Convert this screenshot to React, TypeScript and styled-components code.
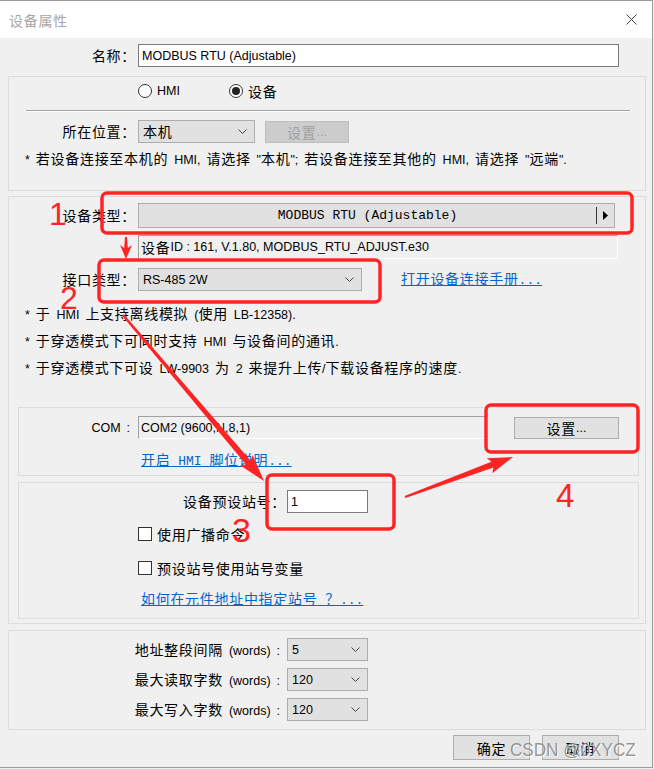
import React from 'react';
import styled, { createGlobalStyle } from 'styled-components';

const GlobalStyle = createGlobalStyle`
  html, body {
    margin: 0;
    padding: 0;
    background: #f0f0f0;
  }
  body {
    font-family: "Liberation Sans", "Noto Sans CJK SC", sans-serif;
    font-size: 12.5px;
    color: #000;
  }
`;

const Window = styled.div`
  position: relative;
  width: 653px;
  height: 768px;
  box-sizing: border-box;
  background: #f0f0f0;
  border-top: 1px solid #9c9c9c;
  border-right: 1px solid #9c9c9c;
  border-bottom: 1px solid #9c9c9c;
  overflow: hidden;
`;

const TitleBar = styled.div`
  height: 37px;
  background: #fff;
  display: flex;
  align-items: center;
  justify-content: space-between;
  padding: 0 15px 0 9px;
  box-sizing: border-box;
`;

const Title = styled.div`
  font-family: "Noto Sans CJK SC", sans-serif;
  font-size: 14px;
  letter-spacing: 0.7px;
  color: #a6a6a6;
`;

const Body = styled.div`
  padding: 6px 6px 0 8px;
`;

// CJK runs: 14px glyphs on a ~15px advance, kept from growing the line box
const Cjk = styled.span`
  font-family: "Noto Sans CJK SC", sans-serif;
  font-size: 14px;
  letter-spacing: 0.7px;
  line-height: 1;
`;

const FieldRow = styled.div<{ $mt?: number; $h?: number }>`
  display: flex;
  align-items: center;
  margin-top: ${(p) => p.$mt ?? 0}px;
  height: ${(p) => p.$h ?? 23}px;
  white-space: nowrap;
`;

const Label = styled.div<{ $w: number; $pr?: number }>`
  width: ${(p) => p.$w}px;
  flex: none;
  box-sizing: border-box;
  padding-right: ${(p) => p.$pr ?? 2}px;
  text-align: right;
  white-space: nowrap;
  word-spacing: 2.5px;
`;

const TextBox = styled.div<{ $w: number }>`
  width: ${(p) => p.$w}px;
  height: 23px;
  box-sizing: border-box;
  border: 1px solid #7a7a7a;
  background: #fff;
  padding: 0 3px;
  display: flex;
  align-items: center;
  white-space: nowrap;
`;

const SunkenBox = styled.div<{ $w: number; $h: number; $ml?: number; $mt?: number }>`
  width: ${(p) => p.$w}px;
  height: ${(p) => p.$h}px;
  margin-left: ${(p) => p.$ml ?? 0}px;
  margin-top: ${(p) => p.$mt ?? 0}px;
  box-sizing: border-box;
  border-top: 1px solid #a0a0a0;
  border-left: 1px solid #a0a0a0;
  border-right: 1px solid #fff;
  border-bottom: 1px solid #fff;
  display: flex;
  align-items: center;
  padding-left: 2px;
  white-space: nowrap;
`;

const Group = styled.div<{ $mt: number; $inset?: boolean; $pb?: number }>`
  margin-top: ${(p) => p.$mt}px;
  margin-left: ${(p) => (p.$inset ? 9 : 0)}px;
  margin-right: ${(p) => (p.$inset ? 6 : 0)}px;
  border: 1px solid #dcdcdc;
  padding-bottom: ${(p) => p.$pb ?? 0}px;
`;

const RadioRow = styled.div`
  height: 28px;
  display: flex;
  align-items: center;
  padding-left: 129px;
`;

const RadioItem = styled.div<{ $w?: number }>`
  display: flex;
  align-items: center;
  gap: 5px;
  width: ${(p) => (p.$w ? `${p.$w}px` : 'auto')};
`;

const Radio = styled.span<{ $on?: boolean }>`
  width: 14px;
  height: 14px;
  box-sizing: border-box;
  border-radius: 50%;
  border: 1px solid #333;
  background: #fff;
  display: flex;
  align-items: center;
  justify-content: center;
  flex: none;
  &::after {
    content: '';
    width: 8px;
    height: 8px;
    border-radius: 50%;
    background: #222;
    display: ${(p) => (p.$on ? 'block' : 'none')};
  }
`;

const Separator = styled.div`
  margin: 5px 15px 0 17px;
  height: 1px;
  background: #a0a0a0;
  border-bottom: 1px solid #fff;
`;

const SelectBox = styled.div<{ $w: number }>`
  width: ${(p) => p.$w}px;
  height: 23px;
  box-sizing: border-box;
  border: 1px solid #adadad;
  background: #e1e1e1;
  display: flex;
  align-items: center;
  justify-content: space-between;
  padding: 0 7px 0 4px;
  flex: none;
`;

const PushButton = styled.div<{ $w: number; $h?: number; $ml?: number; $disabled?: boolean }>`
  width: ${(p) => p.$w}px;
  height: ${(p) => p.$h ?? 25}px;
  margin-left: ${(p) => p.$ml ?? 0}px;
  box-sizing: border-box;
  border: 1px solid ${(p) => (p.$disabled ? '#bfbfbf' : '#adadad')};
  background: ${(p) => (p.$disabled ? '#cccccc' : '#e1e1e1')};
  color: ${(p) => (p.$disabled ? '#a0a0a0' : '#000')};
  display: flex;
  align-items: center;
  justify-content: center;
  flex: none;
`;

const DeviceTypeButton = styled.div`
  width: 477px;
  height: 25px;
  box-sizing: border-box;
  border: 1px solid #adadad;
  background: #e1e1e1;
  display: flex;
  align-items: center;
`;

const DeviceTypeText = styled.div`
  flex: 1;
  text-align: center;
  font-family: "Liberation Mono", monospace;
  font-size: 13px;
`;

const DeviceTypeArrow = styled.div`
  width: 17px;
  height: 17px;
  border-left: 1px solid #333;
  display: flex;
  align-items: center;
  justify-content: center;
`;

const NoteLine = styled.div<{ $mt?: number; $lh?: number }>`
  margin-top: ${(p) => p.$mt ?? 0}px;
  line-height: ${(p) => p.$lh ?? 27}px;
  height: ${(p) => p.$lh ?? 27}px;
  padding-left: 16px;
  white-space: nowrap;
  word-spacing: 2.5px;
`;

const LinkRow = styled.div<{ $mt: number }>`
  margin-top: ${(p) => p.$mt}px;
  height: 20px;
  display: flex;
  align-items: center;
  padding-left: 122px;
`;

const LinkText = styled.span<{ $ml?: number }>`
  margin-left: ${(p) => p.$ml ?? 0}px;
  color: #0066cc;
  text-decoration: underline;
  font-family: "Liberation Mono", "Noto Sans CJK SC", monospace;
  font-size: 13px;
  white-space: nowrap;
`;

const CheckRow = styled.div<{ $mt: number }>`
  margin-top: ${(p) => p.$mt}px;
  height: 20px;
  display: flex;
  align-items: center;
  gap: 5px;
  padding-left: 119px;
`;

const CheckBox = styled.span`
  width: 14px;
  height: 14px;
  box-sizing: border-box;
  border: 1px solid #333;
  background: #fff;
  flex: none;
`;

const Footer = styled.div`
  margin-top: 5px;
  display: flex;
  justify-content: flex-end;
  gap: 12px;
  padding-right: 27px;
`;

const Overlay = styled.svg`
  position: absolute;
  left: 0;
  top: -1px;
  pointer-events: none;
`;

const Watermark = styled.div`
  position: absolute;
  left: 510px;
  top: 738px;
  font-family: "Liberation Sans", sans-serif;
  font-size: 19px;
  color: rgba(125, 125, 125, 0.8);
  text-shadow: 1px 1px 1px rgba(255, 255, 255, 0.9);
  transform: scaleX(0.9);
  transform-origin: left center;
  white-space: nowrap;
  pointer-events: none;
`;

const CJK_RE = /([\u2e80-\u9fff\u3000-\u303f\uff00-\uffef]+)/;

const Mixed = ({ text }: { text: string }) => (
  <>
    {text.split(CJK_RE).map((part, i) =>
      i % 2 === 1 ? <Cjk key={i}>{part}</Cjk> : part
    )}
  </>
);

const Chevron = () => (
  <svg width="9" height="6" viewBox="0 0 9 6">
    <polyline points="0.5,0.5 4.5,4.5 8.5,0.5" fill="none" stroke="#444" strokeWidth="1" />
  </svg>
);

const Select = ({ w, value }: { w: number; value: string }) => (
  <SelectBox $w={w}>
    <span>
      <Mixed text={value} />
    </span>
    <Chevron />
  </SelectBox>
);

const arrowPoints = (
  x1: number,
  y1: number,
  x2: number,
  y2: number,
  head: number,
  headW: number,
  tail: number,
  neck: number
) => {
  const len = Math.hypot(x2 - x1, y2 - y1);
  const ux = (x2 - x1) / len;
  const uy = (y2 - y1) / len;
  const px = -uy;
  const py = ux;
  const bx = x2 - ux * head;
  const by = y2 - uy * head;
  const pts = [
    [x1 + px * tail, y1 + py * tail],
    [bx + px * neck, by + py * neck],
    [bx - ux * 3 + px * headW, by - uy * 3 + py * headW],
    [x2, y2],
    [bx - ux * 3 - px * headW, by - uy * 3 - py * headW],
    [bx - px * neck, by - py * neck],
    [x1 - px * tail, y1 - py * tail],
  ];
  return pts.map((p) => p.map((v) => v.toFixed(1)).join(',')).join(' ');
};

const RED = '#ff2424';

const Annotations = () => (
  <Overlay width={654} height={769} viewBox="0 0 654 769">
    <g fill="none" stroke={RED} strokeWidth={3.5}>
      <rect x={102} y={193} width={530} height={40} rx={5} />
      <rect x={99} y={260} width={281} height={42} rx={5} />
      <rect x={486} y={405} width={152} height={47} rx={5} />
      <rect x={267} y={475} width={127} height={54} rx={5} />
    </g>
    <g fill={RED}>
      <polygon points={arrowPoints(126, 237, 126, 259, 11, 6, 1, 1.8)} />
      <polygon points={arrowPoints(123, 315, 264, 481, 24, 8, 1.2, 3)} />
      <polygon points={arrowPoints(405, 497, 513, 457, 22, 8, 1.2, 3)} />
    </g>
    <g fill={RED} fontFamily="Liberation Sans, sans-serif">
      <text x={49} y={225} fontSize={32}>1</text>
      <text x={60} y={309} fontSize={32}>2</text>
      <text x={232} y={542} fontSize={34}>3</text>
      <text x={556} y={507} fontSize={33}>4</text>
    </g>
  </Overlay>
);

const App = () => {
  return (
    <Window>
      <GlobalStyle />
      <TitleBar>
        <Title>设备属性</Title>
        <svg width="11" height="11" viewBox="0 0 11 11">
          <path d="M0.5 0.5 L10.5 10.5 M10.5 0.5 L0.5 10.5" stroke="#444" strokeWidth="1" />
        </svg>
      </TitleBar>

      <Body>
        <FieldRow>
          <Label $w={130}>
            <Mixed text="名称：" />
          </Label>
          <TextBox $w={481}>MODBUS RTU (Adjustable)</TextBox>
        </FieldRow>

        <Group $mt={9} $pb={20}>
          <RadioRow>
            <RadioItem $w={91}>
              <Radio />
              <span>HMI</span>
            </RadioItem>
            <RadioItem>
              <Radio $on />
              <Mixed text="设备" />
            </RadioItem>
          </RadioRow>
          <Separator />
          <FieldRow $mt={8}>
            <Label $w={129}>
              <Mixed text="所在位置：" />
            </Label>
            <Select w={117} value="本机" />
            <PushButton $w={84} $h={22} $ml={10} $disabled>
              <Mixed text="设置..." />
            </PushButton>
          </FieldRow>
          <NoteLine $mt={7} $lh={20}>
            <Mixed text={'* 若设备连接至本机的 HMI, 请选择 "本机"; 若设备连接至其他的 HMI, 请选择 "远端".'} />
          </NoteLine>
        </Group>

        <Group $mt={5} $pb={4}>
          <FieldRow $mt={6} $h={25}>
            <Label $w={129}>
              <Mixed text="设备类型：" />
            </Label>
            <DeviceTypeButton>
              <DeviceTypeText>MODBUS RTU (Adjustable)</DeviceTypeText>
              <DeviceTypeArrow>
                <svg width="5" height="9" viewBox="0 0 5 9">
                  <polygon points="0,0 5,4.5 0,9" fill="#000" />
                </svg>
              </DeviceTypeArrow>
            </DeviceTypeButton>
          </FieldRow>
          <SunkenBox $w={480} $h={24} $ml={129} $mt={7}>
            <Mixed text="设备 ID : 161, V.1.80, MODBUS_RTU_ADJUST.e30" />
          </SunkenBox>
          <FieldRow $mt={9}>
            <Label $w={129}>
              <Mixed text="接口类型：" />
            </Label>
            <Select w={224} value="RS-485 2W" />
            <LinkText $ml={39}>
              <Mixed text="打开设备连接手册..." />
            </LinkText>
          </FieldRow>
          <NoteLine $mt={11}>
            <Mixed text="* 于 HMI 上支持离线模拟 (使用 LB-12358)." />
          </NoteLine>
          <NoteLine>
            <Mixed text="* 于穿透模式下可同时支持 HMI 与设备间的通讯." />
          </NoteLine>
          <NoteLine>
            <Mixed text="* 于穿透模式下可设 LW-9903 为 2 来提升上传/下载设备程序的速度." />
          </NoteLine>

          <Group $mt={24} $inset $pb={5}>
            <FieldRow $mt={8}>
              <Label $w={119} $pr={8}>
                COM :
              </Label>
              <SunkenBox $w={350} $h={23}>
                COM2 (9600,N,8,1)
              </SunkenBox>
              <PushButton $w={105} $h={22} $ml={26}>
                <Mixed text="设置..." />
              </PushButton>
            </FieldRow>
            <LinkRow $mt={11}>
              <LinkText>
                <Mixed text="开启 HMI 脚位说明..." />
              </LinkText>
            </LinkRow>
          </Group>

          <Group $mt={6} $inset $pb={9}>
            <FieldRow $mt={7}>
              <Label $w={268} $pr={1}>
                <Mixed text="设备预设站号：" />
              </Label>
              <TextBox $w={81}>1</TextBox>
            </FieldRow>
            <CheckRow $mt={11}>
              <CheckBox />
              <Mixed text="使用广播命令" />
            </CheckRow>
            <CheckRow $mt={14}>
              <CheckBox />
              <Mixed text="预设站号使用站号变量" />
            </CheckRow>
            <LinkRow $mt={11}>
              <LinkText>
                <Mixed text="如何在元件地址中指定站号 ？..." />
              </LinkText>
            </LinkRow>
          </Group>
        </Group>

        <Group $mt={6} $pb={8}>
          {[
            ['地址整段间隔', '5'],
            ['最大读取字数', '120'],
            ['最大写入字数', '120'],
          ].map(([label, value]) => (
            <FieldRow key={label} $mt={7}>
              <Label $w={278} $pr={7}>
                <Mixed text={`${label} (words) :`} />
              </Label>
              <Select w={81} value={value} />
            </FieldRow>
          ))}
        </Group>

        <Footer>
          <PushButton $w={77}>
            <Mixed text="确定" />
          </PushButton>
          <PushButton $w={77}>
            <Mixed text="取消" />
          </PushButton>
        </Footer>
      </Body>

      <Annotations />
      <Watermark>CSDN @0XYCZ</Watermark>
    </Window>
  );
};

export default App;
